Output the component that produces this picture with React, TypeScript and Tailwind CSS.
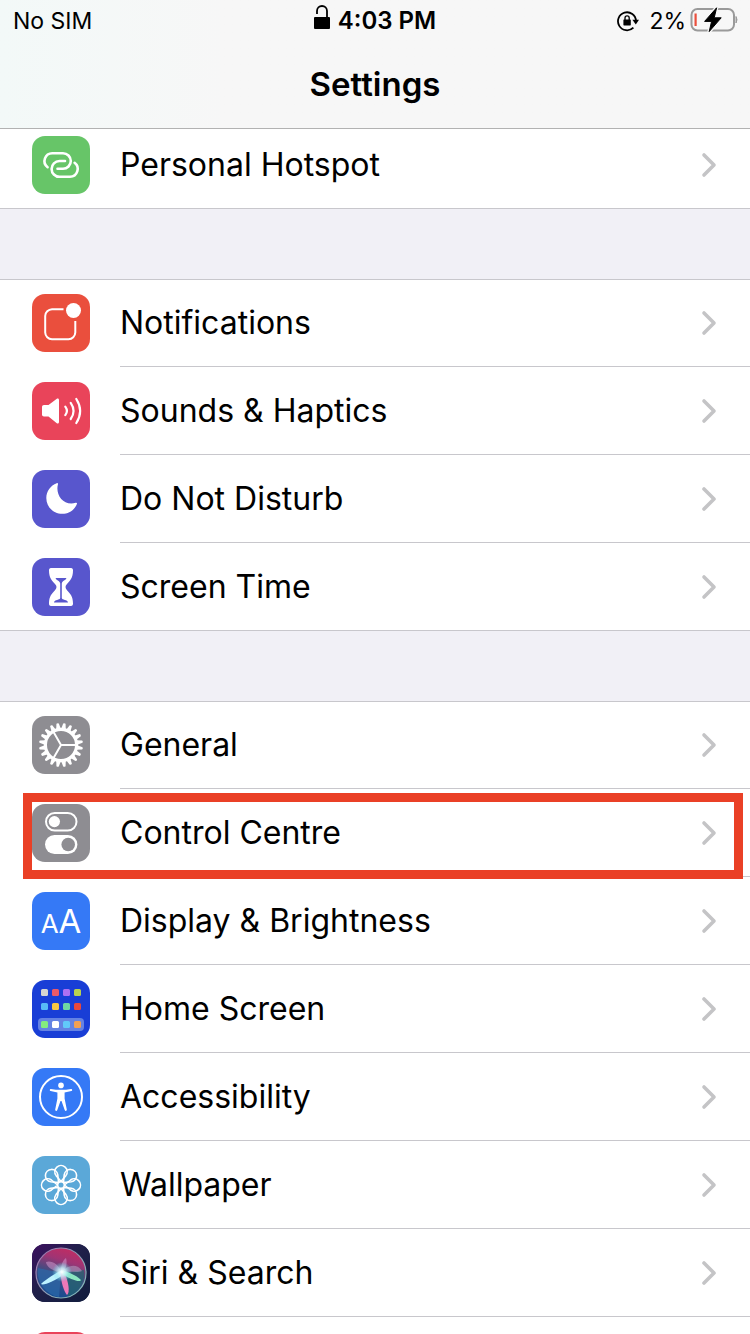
import type { ReactNode } from 'react'

type Item = {
  label?: string
  tile: string
  icon: ReactNode
  highlighted?: boolean
}

const teeth = Array.from({ length: 20 }, (_, i) => i * 18)
const petals = Array.from({ length: 8 }, (_, i) => i * 45)

function Glyph({ children }: { children: ReactNode }) {
  return (
    <svg className="size-full" viewBox="0 0 58 58" fill="none" stroke="white" strokeLinecap="round" strokeLinejoin="round" aria-hidden="true">
      {children}
    </svg>
  )
}

const HotspotIcon = () => (
  <Glyph>
    <g strokeWidth="2.6">
      <path d="M15.6 31.2A7.8 7.8 0 0 1 20.5 17.2H31A7.8 7.8 0 0 1 31 32.8H25.5" />
      <path d="M33 25H27.5A7.9 7.9 0 0 0 27.5 40.8H38A7.8 7.8 0 0 0 42.6 26.8" />
    </g>
  </Glyph>
)

const NotificationsIcon = () => (
  <Glyph>
    <path strokeWidth="2" strokeLinecap="butt" d="M31.5 15.2H20A7 7 0 0 0 13.2 22V38.5A7 7 0 0 0 20 45.3H36.5A7 7 0 0 0 43.3 38.5V27" />
    <circle cx="41.5" cy="16.5" r="7.5" fill="white" stroke="none" />
  </Glyph>
)

const SoundsIcon = () => (
  <Glyph>
    <path fill="white" stroke="none" d="M12 23H16.5L24.5 17C25.8 16 27 16.6 27 18V40C27 41.4 25.8 42 24.5 41L16.5 34.5H12C10.8 34.5 10 33.7 10 32.5V25C10 23.8 10.8 23 12 23Z" />
    <g strokeWidth="2.2">
      <path d="M33.3 24.6Q36.5 29 33.3 33.2" />
      <path d="M38.7 20.8Q44.4 29 38.7 37" />
      <path d="M44.3 17Q52 29 44.3 41" />
    </g>
  </Glyph>
)

const MoonIcon = () => (
  <Glyph>
    <path fill="white" stroke="none" d="M24.7 13.2C25.7 12.8 26.3 13.5 25.9 14.5C23.2 24.8 31.5 36.4 43.8 32.8C44.8 32.5 45.3 33.2 44.9 34.1C42.5 40 37 43.8 30.3 43.8C21.4 43.8 14.3 36.8 14.3 27.9C14.3 21.2 18.5 15.6 24.7 13.2Z" />
  </Glyph>
)

const HourglassIcon = () => (
  <Glyph>
    <path fill="white" stroke="none" d="M19 10H39C40.5 10 41 11 41 12.5C41 20 38 22.5 35 26C33 28.2 33 30 35 32.2C38 35.5 41 38 41 45.5C41 47 40.5 48 39 48H19C17.5 48 17 47 17 45.5C17 38 20 35.5 23 32.2C25 30 25 28.2 23 26C20 22.5 17 20 17 12.5C17 11 17.5 10 19 10Z" />
    <path fill="#5856cd" stroke="none" d="M23.6 20H34.4C34.2 22.4 30 22.4 29.8 25.5V40C30 42 35.7 41.5 36 44.6H22C22.3 41.5 28 42 28.2 40V25.5C28 22.4 23.8 22.4 23.6 20Z" />
  </Glyph>
)

const GearIcon = () => (
  <Glyph>
    {teeth.map((angle) => (
      <path key={angle} transform={`rotate(${angle + 9} 29 29)`} fill="white" stroke="none" d="M26.7 13L27.8 7.4Q29 6.4 30.2 7.4L31.3 13Z" />
    ))}
    <circle cx="29" cy="29" r="15.6" strokeWidth="3.2" />
    <path strokeWidth="2" d="M29 29H43M29 29L21.8 16.6M29 29L21.8 41.4" />
  </Glyph>
)

const TogglesIcon = () => (
  <Glyph>
    <rect x="14" y="9" width="30.5" height="17.5" rx="8.75" strokeWidth="2" />
    <circle cx="22.4" cy="17.6" r="5.6" fill="white" stroke="none" />
    <rect x="13" y="31" width="32.4" height="19" rx="9.5" fill="white" stroke="none" />
    <circle cx="36.2" cy="40.5" r="6.8" fill="#8e8d92" stroke="none" />
  </Glyph>
)

const LettersIcon = () => (
  <span className="flex h-full items-baseline justify-center pt-[5px] text-white" aria-hidden="true">
    <span className="text-[26px] leading-[48px]">A</span>
    <span className="text-[33px] leading-[48px]">A</span>
  </span>
)

const HomeIcon = () => (
  <Glyph>
    <g stroke="none">
      <rect x="6" y="38" width="46" height="13" rx="4" fill="#6482e3" />
      <rect x="9" y="9" width="7" height="7" rx="1.5" fill="#d6d5d1" />
      <rect x="20" y="9" width="7" height="7" rx="1.5" fill="#ec5a68" />
      <rect x="31" y="9" width="7" height="7" rx="1.5" fill="#ae70f3" />
      <rect x="42" y="9" width="7" height="7" rx="1.5" fill="#b8d350" />
      <rect x="9" y="23" width="7" height="7" rx="1.5" fill="#58bbf7" />
      <rect x="20" y="23" width="7" height="7" rx="1.5" fill="#f7c744" />
      <rect x="31" y="23" width="7" height="7" rx="1.5" fill="#6fd5a2" />
      <rect x="42" y="23" width="7" height="7" rx="1.5" fill="#e9483b" />
      <rect x="9" y="41" width="7" height="7" rx="1.5" fill="#84ed7e" />
      <rect x="20" y="41" width="7" height="7" rx="1.5" fill="white" />
      <rect x="31" y="41" width="7" height="7" rx="1.5" fill="#61c9fa" />
      <rect x="42" y="41" width="7" height="7" rx="1.5" fill="#f3a052" />
    </g>
  </Glyph>
)

const AccessibilityIcon = () => (
  <Glyph>
    <circle cx="29" cy="29" r="21" strokeWidth="2" />
    <circle cx="29" cy="17.4" r="2.8" fill="white" stroke="none" />
    <path fill="white" stroke="none" d="M18.8 20.9Q29 22.6 39.2 20.9C40.4 20.8 40.6 22.7 39.4 23L32.6 24.4V30.5L34.8 41.5C35 43 33.2 43.5 32.7 42L29.5 33H28.5L25.3 42C24.8 43.5 23 43 23.2 41.5L25.4 30.5V24.4L18.6 23C17.4 22.7 17.6 20.8 18.8 20.9Z" />
  </Glyph>
)

const FlowerIcon = () => (
  <Glyph>
    <g strokeWidth="1.6">
      {petals.map((angle) => (
        <path key={angle} transform={`rotate(${angle} 29 29)`} d="M29 25.6L24 19.4A6.2 6.2 0 1 1 34 19.4Z" />
      ))}
      <circle cx="29" cy="29" r="3.4" />
    </g>
  </Glyph>
)

const SiriIcon = () => (
  <Glyph>
    <defs>
      <linearGradient id="siri-tile" x1="0" y1="0" x2="1" y2="1">
        <stop offset="0" stopColor="#3c1060" />
        <stop offset="0.45" stopColor="#20204a" />
        <stop offset="1" stopColor="#101c3c" />
      </linearGradient>
      <linearGradient id="siri-orb" x1="0.65" y1="0" x2="0.35" y2="1">
        <stop offset="0" stopColor="#c22c62" />
        <stop offset="0.25" stopColor="#a03474" />
        <stop offset="0.5" stopColor="#4a4a80" />
        <stop offset="1" stopColor="#134c92" />
      </linearGradient>
      <linearGradient id="siri-ring" x1="0" y1="0" x2="1" y2="1">
        <stop offset="0" stopColor="#a56fae" />
        <stop offset="1" stopColor="#7cc4b8" />
      </linearGradient>
      <radialGradient id="siri-core">
        <stop offset="0" stopColor="white" />
        <stop offset="0.4" stopColor="#c8f4fb" stopOpacity="0.8" />
        <stop offset="1" stopColor="#5fd8e8" stopOpacity="0" />
      </radialGradient>
    </defs>
    <rect width="58" height="58" fill="url(#siri-tile)" stroke="none" />
    <circle cx="29" cy="29" r="25" fill="url(#siri-orb)" stroke="url(#siri-ring)" strokeWidth="1.2" />
    <g stroke="none">
      <path fill="#2b6aa8" fillOpacity="0.7" d="M29 29L6 24C4 36 12 50 27 53Z" />
      <path fill="#20656f" fillOpacity="0.7" d="M29 29L52 26C54 37 46 50 36 52Z" />
      <path fill="#d8a0d4" fillOpacity="0.5" d="M28 28C20 27 14 22 14 18C19 16 27 20 29 28C29 20 31 16 34 14C36 20 33 26 31 28Z" />
      <path fill="#b9a8c8" fillOpacity="0.5" d="M30 28C36 20 46 20 50 27C46 29 38 27 30 28Z" />
      <path fill="#bdf2ff" d="M30 26C24 29 14 35 9 40C11 42 23 37 32 30Z" />
      <path fill="#ee78b8" d="M28.5 29C29 38 32 48 35 51C38 49 37 38 32 28Z" />
      <path fill="#8be6c0" d="M30 26C36 28 44 31 49 36C48 39 38 35 30 30Z" />
      <circle cx="30" cy="28" r="10" fill="url(#siri-core)" />
    </g>
  </Glyph>
)

const groups: Item[][] = [
  [{ label: 'Personal Hotspot', tile: 'bg-[#67c568]', icon: <HotspotIcon /> }],
  [
    { label: 'Notifications', tile: 'bg-[#ea4f3d]', icon: <NotificationsIcon /> },
    { label: 'Sounds & Haptics', tile: 'bg-[#e9445a]', icon: <SoundsIcon /> },
    { label: 'Do Not Disturb', tile: 'bg-[#5856cd]', icon: <MoonIcon /> },
    { label: 'Screen Time', tile: 'bg-[#5856cd]', icon: <HourglassIcon /> },
  ],
  [
    { label: 'General', tile: 'bg-[#8e8d92]', icon: <GearIcon /> },
    { label: 'Control Centre', tile: 'bg-[#8e8d92]', icon: <TogglesIcon />, highlighted: true },
    { label: 'Display & Brightness', tile: 'bg-[#3579f6]', icon: <LettersIcon /> },
    { label: 'Home Screen', tile: 'bg-[#193ed6]', icon: <HomeIcon /> },
    { label: 'Accessibility', tile: 'bg-[#3579f6]', icon: <AccessibilityIcon /> },
    { label: 'Wallpaper', tile: 'bg-[#5ba8d8]', icon: <FlowerIcon /> },
    { label: 'Siri & Search', tile: 'bg-[#20204a]', icon: <SiriIcon /> },
    { tile: 'bg-[#e9445a]', icon: null },
  ],
]

function Row({ label, tile, icon, highlighted }: Item) {
  return (
    <li className="relative">
      <a href="#" className="flex h-[88px] gap-[30px] pl-8">
        <span className={`mt-[15px] size-[58px] shrink-0 overflow-hidden rounded-[13px] ${tile}`}>{icon}</span>
        <span className="flex flex-1 items-center justify-between border-b border-[#c8c7cc] pr-[33px] text-[32px] leading-10">
          <span>{label}</span>
          <svg className="h-[26px] w-4 shrink-0" viewBox="0 0 16 26" fill="none" stroke="#c4c4c6" strokeWidth="3.6" strokeLinecap="round" strokeLinejoin="round" aria-hidden="true">
            <path d="M3 3L13 13L3 23" />
          </svg>
        </span>
      </a>
      {highlighted && <span className="pointer-events-none absolute -bottom-0.5 left-[23px] right-[7px] top-1 z-10 border-[9px] border-[#ea4026]" />}
    </li>
  )
}

function StatusBar() {
  return (
    <div className="grid h-[42px] grid-cols-[1fr_auto_1fr] items-center px-3 text-[23px] leading-10">
      <span className="pl-px">No SIM</span>
      <div className="flex items-center gap-2 text-2xl font-semibold leading-10">
        <svg className="mb-2 h-6 w-4" viewBox="0 0 16 24" aria-hidden="true">
          <rect y="12" width="16" height="12" rx="1" />
          <path d="M3 9V6A5 5 0 0 1 13 6V13" fill="none" stroke="black" strokeWidth="1.8" />
        </svg>
        <span>4:03 PM</span>
      </div>
      <div className="flex items-center justify-end gap-1">
        <svg className="mr-1.5 size-[22px]" viewBox="0 0 22 22" aria-hidden="true">
          <path d="M16.4 17.6A9 9 0 1 1 19 11" fill="none" stroke="black" strokeWidth="1.8" />
          <path d="M15.4 9.8H22L18.8 14.6Z" />
          <rect x="6.4" y="9.4" width="7.4" height="6" rx="0.6" />
          <path d="M8 10V8A2.1 2.1 0 0 1 12.2 8V10" fill="none" stroke="black" strokeWidth="1.3" />
        </svg>
        <span>2%</span>
        <svg className="mb-0.5 h-[26px] w-12" viewBox="0 0 48 26" aria-hidden="true">
          <rect x="1.5" y="2" width="42.5" height="21.5" rx="6" fill="none" stroke="#9a9a9a" strokeWidth="2" />
          <path d="M46 9.5Q48 12.7 46 16Z" fill="#9a9a9a" stroke="#9a9a9a" />
          <rect x="4.5" y="6.5" width="2.2" height="12.5" fill="#ea4f3d" />
          <path d="M26.6 0.8L14.6 14.4H21.6L19.2 24.6L31.2 10.8H24.2Z" stroke="#f7f7f7" strokeWidth="3.6" strokeLinejoin="round" />
          <path d="M26.6 0.8L14.6 14.4H21.6L19.2 24.6L31.2 10.8H24.2Z" stroke="black" strokeWidth="1" strokeLinejoin="round" />
        </svg>
      </div>
    </div>
  )
}

export default function App() {
  return (
    <div className="h-screen overflow-hidden bg-[#f1f0f6] font-['Inter','Liberation_Sans',sans-serif] text-black">
      <header className="relative z-10 h-[129px] border-b border-[#b2b2b2] bg-[#f7f7f7] bg-linear-to-r from-[#f3f9f8] to-[#f7f7f7] to-30%">
        <StatusBar />
        <h1 className="pt-[22px] text-center text-[33px] font-semibold leading-10">Settings</h1>
      </header>

      {/* list is scrolled slightly under the header */}
      <main className="-mt-2 flex flex-col gap-[70px]">
        {groups.map((items, i) => (
          <ul key={i} className="bg-white shadow-[inset_0_1px_0_#c8c7cc,inset_0_-1px_0_#c8c7cc]">
            {items.map((item, j) => (
              <Row key={j} {...item} />
            ))}
          </ul>
        ))}
      </main>
    </div>
  )
}
